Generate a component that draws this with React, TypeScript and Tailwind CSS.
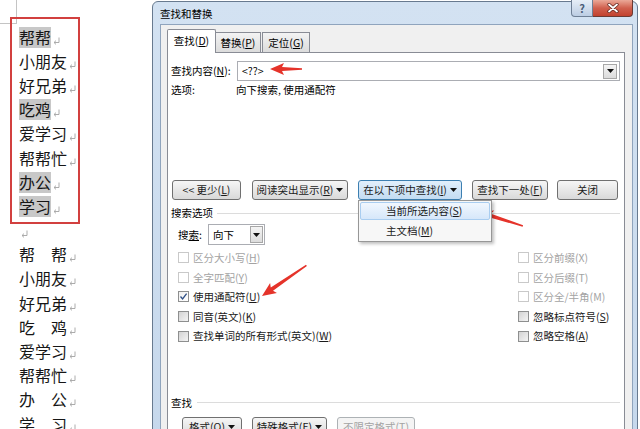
import React from 'react';

const Mark = () => (
  <svg width="7" height="8" viewBox="0 0 7 8" className="ml-[2px] mt-[7px] shrink-0">
    <path d="M6 0.5V5.5H1.2" stroke="#a3a3a3" strokeWidth="0.9" fill="none" />
    <path d="M3 3.6L1 5.5L3 7.4" stroke="#a3a3a3" strokeWidth="0.9" fill="none" />
  </svg>
);

type L = { t?: string; hl?: boolean; sp?: [string, string]; empty?: boolean };

const lines: L[] = [
  { t: '帮帮', hl: true },
  { t: '小朋友' },
  { t: '好兄弟' },
  { t: '吃鸡', hl: true },
  { t: '爱学习' },
  { t: '帮帮忙' },
  { t: '办公', hl: true },
  { t: '学习', hl: true },
  { empty: true },
  { sp: ['帮', '帮'] },
  { t: '小朋友' },
  { t: '好兄弟' },
  { sp: ['吃', '鸡'] },
  { t: '爱学习' },
  { t: '帮帮忙' },
  { sp: ['办', '公'] },
  { sp: ['学', '习'] },
];

const Tri = () => (
  <svg width="7" height="4" viewBox="0 0 7 4" className="shrink-0">
    <path d="M0 0H7L3.5 4Z" fill="#111" />
  </svg>
);

const U = ({ c }: { c: string }) => <span className="underline underline-offset-[1px]">{c}</span>;

const Cb = ({ label, disabled, checked }: { label: React.ReactNode; disabled?: boolean; checked?: boolean }) => (
  <div className="h-[19.6px] flex items-center">
    {disabled ? (
      <div className="w-[11px] h-[11px] border border-[#c9c9c9] bg-white shrink-0" />
    ) : checked ? (
      <div className="w-[11px] h-[11px] border border-[#8e8f8f] bg-linear-to-br from-[#f0f0f0] to-[#ffffff] flex items-center justify-center shrink-0">
        <svg width="9" height="9" viewBox="0 0 9 9">
          <path d="M1.5 4.5L3.6 7L7.6 1.6" stroke="#2f4f86" strokeWidth="1.3" fill="none" />
        </svg>
      </div>
    ) : (
      <div className="w-[11px] h-[11px] border border-[#8e8f8f] bg-linear-to-br from-[#d3d3d3] to-[#f4f4f4] shrink-0" />
    )}
    <span className={disabled ? 'ml-[4px] text-[#a3a3a3]' : 'ml-[4px] text-[#1a1a1a]'}>{label}</span>
  </div>
);

const btn =
  'h-[20px] flex items-center justify-center rounded-[3px] border border-[#707070] bg-linear-to-b from-[#f6f6f6] to-[#d9d9d9] text-[#1a1a1a] shrink-0';

export default function App() {
  return (
    <div className="relative w-[640px] h-[429px] overflow-hidden bg-white flex font-['Noto_Sans_CJK_SC','Noto_Sans',sans-serif] text-black">
      {/* Document */}
      <div className="relative w-[152px] shrink-0 pt-[25px] pl-[19px] text-[16px] text-[#161616]">
        <div className="absolute left-0 top-0 w-[17px] h-[24px] border-r border-b border-[#c4c4c4]" />
        {lines.map((l, i) => (
          <div key={i} className="h-[24.2px] flex items-center">
            {l.empty ? null : l.sp ? (
              <span className="w-[48px] flex justify-between leading-[21px]">
                <span>{l.sp[0]}</span>
                <span>{l.sp[1]}</span>
              </span>
            ) : l.hl ? (
              <span className="bg-[#c8c8c8] h-[21px] leading-[21px]">{l.t}</span>
            ) : (
              <span className="leading-[21px]">{l.t}</span>
            )}
            <Mark />
          </div>
        ))}
        <div className="absolute left-[10px] top-[17px] w-[70px] h-[207px] border-2 border-[#d2403f]" />
      </div>

      {/* Dialog */}
      <div className="w-[486px] shrink-0 mt-[1px] h-[450px] flex flex-col border border-[#687a8f] rounded-t-[6px] bg-linear-to-b from-[#d3e2f2] to-[#c6d8ec] text-[10.5px]">
        <div className="h-[22px] flex items-start shrink-0">
          <div className="ml-[7px] mt-[5px] leading-[14px] text-[#000]">查找和替换</div>
          <div className="flex-1" />
          <div className="flex -mt-[2px] mr-[4px]">
            <div className="w-[22px] h-[17px] rounded-bl-[4px] border border-t-0 border-[#6e7f95] bg-linear-to-b from-[#e6eef7] to-[#bccde3] flex items-center justify-center text-[11px] font-bold text-[#4a5d78] leading-none">
              ?
            </div>
            <div className="w-[40px] h-[17px] rounded-br-[4px] border border-t-0 border-l-0 border-[#6b3a33] bg-linear-to-b from-[#eaa898] via-[#d0604e] to-[#c2412e] flex items-center justify-center">
              <svg width="12" height="10" viewBox="0 0 12 10">
                <path d="M2 1.5L10 8.5M10 1.5L2 8.5" stroke="#5a2019" strokeWidth="3.2" strokeLinecap="round" />
                <path d="M2 1.5L10 8.5M10 1.5L2 8.5" stroke="#ffffff" strokeWidth="1.8" strokeLinecap="round" />
              </svg>
            </div>
          </div>
        </div>

        <div className="flex-1 ml-[7px] mr-[4px] border-l border-t border-r border-[#8fa4bd] bg-[#f0f0f0] pl-[6px] pr-[7px] pt-[4px] flex flex-col">
          {/* Tabs */}
          <div className="relative z-10 h-[24px] flex items-end shrink-0">
            <div className="w-[49px] h-[24px] border-l border-t border-r border-[#898c95] bg-white rounded-t-[2px] flex items-center justify-center pb-[2px]">
              查找(<U c="D" />)
            </div>
            <div className="w-[45px] h-[20px] mb-[1px] border-t border-r border-[#898c95] bg-linear-to-b from-[#f3f3f3] to-[#dcdcdc] flex items-center justify-center">
              替换(<U c="P" />)
            </div>
            <div className="w-[48px] h-[20px] mb-[1px] ml-[1px] border-l border-t border-r border-[#898c95] bg-linear-to-b from-[#f3f3f3] to-[#dcdcdc] flex items-center justify-center">
              定位(<U c="G" />)
            </div>
          </div>

          {/* Panel */}
          <div className="-mt-[1px] flex-1 border border-[#898c95] bg-white pl-[3px] pr-[4px] flex flex-col">
            <div className="mt-[8px] h-[20px] flex items-center shrink-0">
              <div className="w-[66px]">
                查找内容(<U c="N" />):
              </div>
              <div className="w-[383px] h-[20px] border border-[#abadb3] flex items-center pl-[4px]">
                <span>{'<??>'}</span>
                <div className="flex-1" />
                <div className="w-[14px] h-[15px] mr-[2px] border border-[#a7a7a7] bg-linear-to-b from-[#f4f4f4] to-[#dcdcdc] flex items-center justify-center">
                  <Tri />
                </div>
              </div>
            </div>
            <div className="mt-[2px] h-[14px] leading-[14px] flex shrink-0">
              <div className="w-[65px]">选项:</div>
              <div>向下搜索, 使用通配符</div>
            </div>

            {/* Buttons */}
            <div className="mt-[83px] h-[20px] flex shrink-0">
              <div className={btn + ' ml-[1px] w-[69px]'}>
                {'<< 更少('}
                <U c="L" />)
              </div>
              <div className={btn + ' ml-[11px] w-[96px]'}>
                阅读突出显示(<U c="R" />)<span className="ml-[3px] flex"><Tri /></span>
              </div>
              <div className="relative ml-[10px] w-[104px] h-[20px] flex items-center justify-center rounded-[3px] border border-[#3c7fb1] bg-linear-to-b from-[#e1effb] to-[#c3dcf2] text-[#1a1a1a] shrink-0">
                在以下项中查找(<U c="I" />)<span className="ml-[3px] flex"><Tri /></span>
                <div className="absolute top-[19px] -left-[1px] w-[134px] h-[42px] bg-[#f7f7f7] border border-[#979797] p-[1px] z-20 shadow-[2px_2px_3px_rgba(0,0,0,0.25)] flex flex-col">
                  <div className="h-[18px] border border-[#a9cdf0] rounded-[2px] bg-linear-to-b from-[#f1f7fe] to-[#d6e7fa] flex items-center pl-[25px]">
                    当前所选内容(<U c="S" />)
                  </div>
                  <div className="mt-[2px] h-[18px] flex items-center pl-[26px]">
                    主文档(<U c="M" />)
                  </div>
                </div>
              </div>
              <div className={btn + ' ml-[10px] w-[76px]'}>
                查找下一处(<U c="F" />)
              </div>
              <div className={btn + ' ml-[9px] w-[61px]'}>关闭</div>
            </div>

            <div className="mt-[7px] h-[12px] flex items-center shrink-0">
              <span className="leading-[12px]">搜索选项</span>
              <div className="flex-1 h-px bg-[#dcdcdc] ml-[4px]" />
            </div>

            <div className="mt-[5px] h-[21px] flex items-center pl-[7px] shrink-0">
              <div className="w-[30px]">
                搜<span className="underline underline-offset-[1px]">索</span>:
              </div>
              <div className="w-[57px] h-[21px] border border-[#abadb3] flex items-center pl-[4px]">
                <span>向下</span>
                <div className="flex-1" />
                <div className="w-[13px] h-[17px] mr-[1px] border border-[#a7a7a7] bg-linear-to-b from-[#f4f4f4] to-[#dcdcdc] flex items-center justify-center">
                  <Tri />
                </div>
              </div>
            </div>

            <div className="mt-[3px] flex shrink-0">
              <div className="w-[347px] pl-[7px] flex flex-col">
                <Cb disabled label={<>区分大小写(<U c="H" />)</>} />
                <Cb disabled label={<>全字匹配(<U c="Y" />)</>} />
                <Cb checked label={<>使用通配符(<U c="U" />)</>} />
                <Cb label={<>同音(英文)(<U c="K" />)</>} />
                <Cb label={<>查找单词的所有形式(英文)(<U c="W" />)</>} />
              </div>
              <div className="flex flex-col">
                <Cb disabled label={<>区分前缀(X)</>} />
                <Cb disabled label={<>区分后缀(T)</>} />
                <Cb disabled label={<>区分全/半角(M)</>} />
                <Cb label={<>忽略标点符号(<U c="S" />)</>} />
                <Cb label={<>忽略空格(<U c="A" />)</>} />
              </div>
            </div>

            <div className="mt-[50px] h-[14px] flex items-center shrink-0">
              <span className="leading-[14px]">查找</span>
              <div className="flex-1 h-px bg-[#dcdcdc] ml-[5px]" />
            </div>

            <div className="mt-[7px] h-[20px] flex shrink-0">
              <div className={btn + ' ml-[11px] w-[60px]'}>
                格式(<U c="O" />)<span className="ml-[3px] flex"><Tri /></span>
              </div>
              <div className={btn + ' ml-[10px] w-[75px]'}>
                特殊格式(<U c="E" />)<span className="ml-[3px] flex"><Tri /></span>
              </div>
              <div className="ml-[10px] w-[78px] h-[20px] flex items-center justify-center rounded-[3px] border border-[#adb2b5] bg-[#f4f4f4] text-[#a3a3a3] shrink-0">
                不限定格式(<U c="T" />)
              </div>
            </div>
          </div>
        </div>
      </div>

      {/* Annotation arrows */}
      <svg className="absolute inset-0 pointer-events-none" width="640" height="429" viewBox="0 0 640 429">
        <g fill="#e5332a">
          <polygon transform="translate(270 69)" points="0,0 14,-6 12,-2 32,-0.8 32,0.8 12,2 14,6" />
          <polygon transform="translate(479 212) rotate(17.6)" points="0,0 14,-6 12,-2 46,-0.8 46,0.8 12,2 14,6" />
          <polygon transform="translate(262 296) rotate(-34.6)" points="0,0 14,-6 12,-2 54,-0.8 54,0.8 12,2 14,6" />
        </g>
      </svg>
    </div>
  );
}
